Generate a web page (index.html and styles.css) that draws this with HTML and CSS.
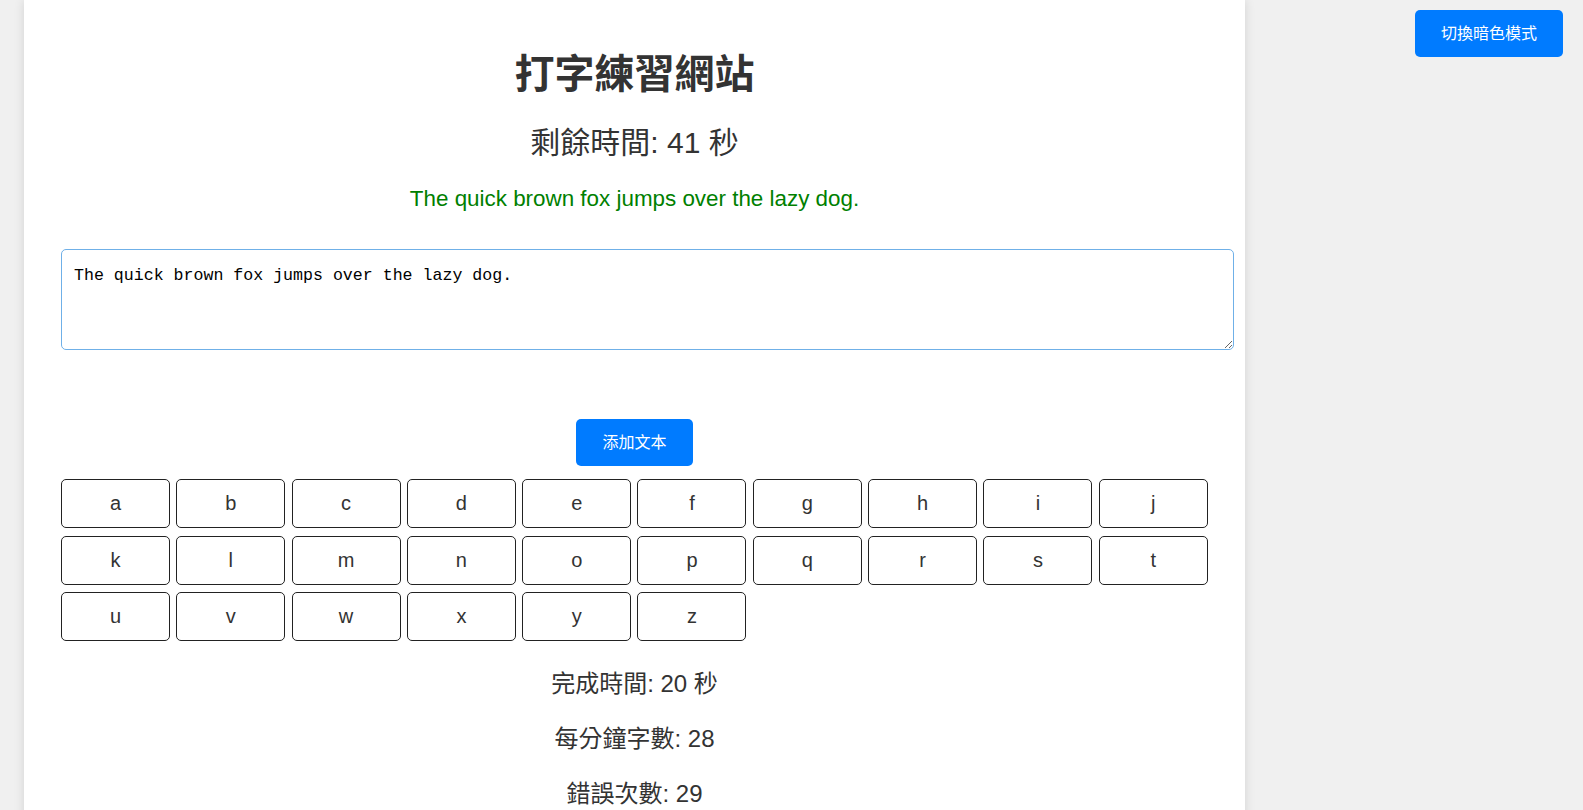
FILE: index.html
```html
<!DOCTYPE html>
<html lang="zh-Hant">
<head>
<meta charset="utf-8">
<title>打字練習網站</title>
<link rel="stylesheet" href="styles.css">
</head>
<body>
<button class="toggle-btn">切換暗色模式</button>
<div class="container">
  <h1 class="title">打字練習網站</h1>
  <div class="timer">剩餘時間: 41 秒</div>
  <div class="sample">The quick brown fox jumps over the lazy dog.</div>
  <textarea class="input">The quick brown fox jumps over the lazy dog.</textarea>
  <button class="add-btn">添加文本</button>
  <div class="keyboard">
    <button class="key">a</button><button class="key">b</button><button class="key">c</button><button class="key">d</button><button class="key">e</button><button class="key">f</button><button class="key">g</button><button class="key">h</button><button class="key">i</button><button class="key">j</button>
    <button class="key">k</button><button class="key">l</button><button class="key">m</button><button class="key">n</button><button class="key">o</button><button class="key">p</button><button class="key">q</button><button class="key">r</button><button class="key">s</button><button class="key">t</button>
    <button class="key">u</button><button class="key">v</button><button class="key">w</button><button class="key">x</button><button class="key">y</button><button class="key">z</button>
  </div>
  <div class="stats">
    <p class="stat">完成時間: 20 秒</p>
    <p class="stat">每分鐘字數: 28</p>
    <p class="stat">錯誤次數: 29</p>
  </div>
</div>
</body>
</html>
```

FILE: styles.css
```css
html, body {
  margin: 0;
  height: 100%;
  overflow: hidden;
}
body {
  background: #f0f0f0;
  font-family: "Liberation Sans", "Noto Sans CJK TC", sans-serif;
  color: #333;
}
.container {
  display: flow-root;
  box-sizing: border-box;
  width: 1221px;
  min-height: 100%;
  margin-left: 24px;
  padding: 50px 37px 40px;
  background: #fff;
  box-shadow: 0 0 10px rgba(0, 0, 0, 0.12);
  text-align: center;
}
.title {
  margin: 0;
  font-size: 40px;
  line-height: 48px;
  font-weight: bold;
  color: #333;
}
.timer {
  margin-top: 27px;
  font-size: 30px;
  line-height: 36px;
}
.sample {
  margin-top: 24px;
  font-size: 22.4px;
  line-height: 27px;
  color: #008000;
}
.input {
  display: block;
  width: 100%;
  height: 75px;
  margin: 37px 0 0;
  padding: 16px 12px 8px;
  border: 1px solid #6fb0e8;
  border-radius: 5px;
  outline: none;
  font-family: "Liberation Mono", monospace;
  font-size: 16.6px;
  line-height: 20px;
  color: #000;
  background: #fff;
  text-align: left;
}
.add-btn,
.toggle-btn {
  padding: 13px 26px;
  border: none;
  border-radius: 5px;
  background: #007bff;
  color: #fff;
  font-family: "Liberation Sans", "Noto Sans CJK TC", sans-serif;
  font-size: 16px;
  line-height: 21px;
  cursor: pointer;
}
.add-btn {
  margin-top: 69px;
}
.toggle-btn {
  position: fixed;
  top: 10px;
  right: 20px;
  line-height: 22px;
  padding-bottom: 12px;
}
.keyboard {
  display: grid;
  grid-template-columns: repeat(10, 109px);
  column-gap: 6.3px;
  row-gap: 7.5px;
  margin-top: 13px;
}
.key {
  height: 49px;
  padding: 0;
  border: 1px solid #222;
  border-radius: 5px;
  background: #fff;
  color: #333;
  font-family: "Liberation Sans", sans-serif;
  font-size: 20px;
  line-height: 47px;
}
.stats {
  margin-top: 27px;
}
.stat {
  margin: 0 0 24px;
  font-size: 24px;
  line-height: 31px;
}
```
